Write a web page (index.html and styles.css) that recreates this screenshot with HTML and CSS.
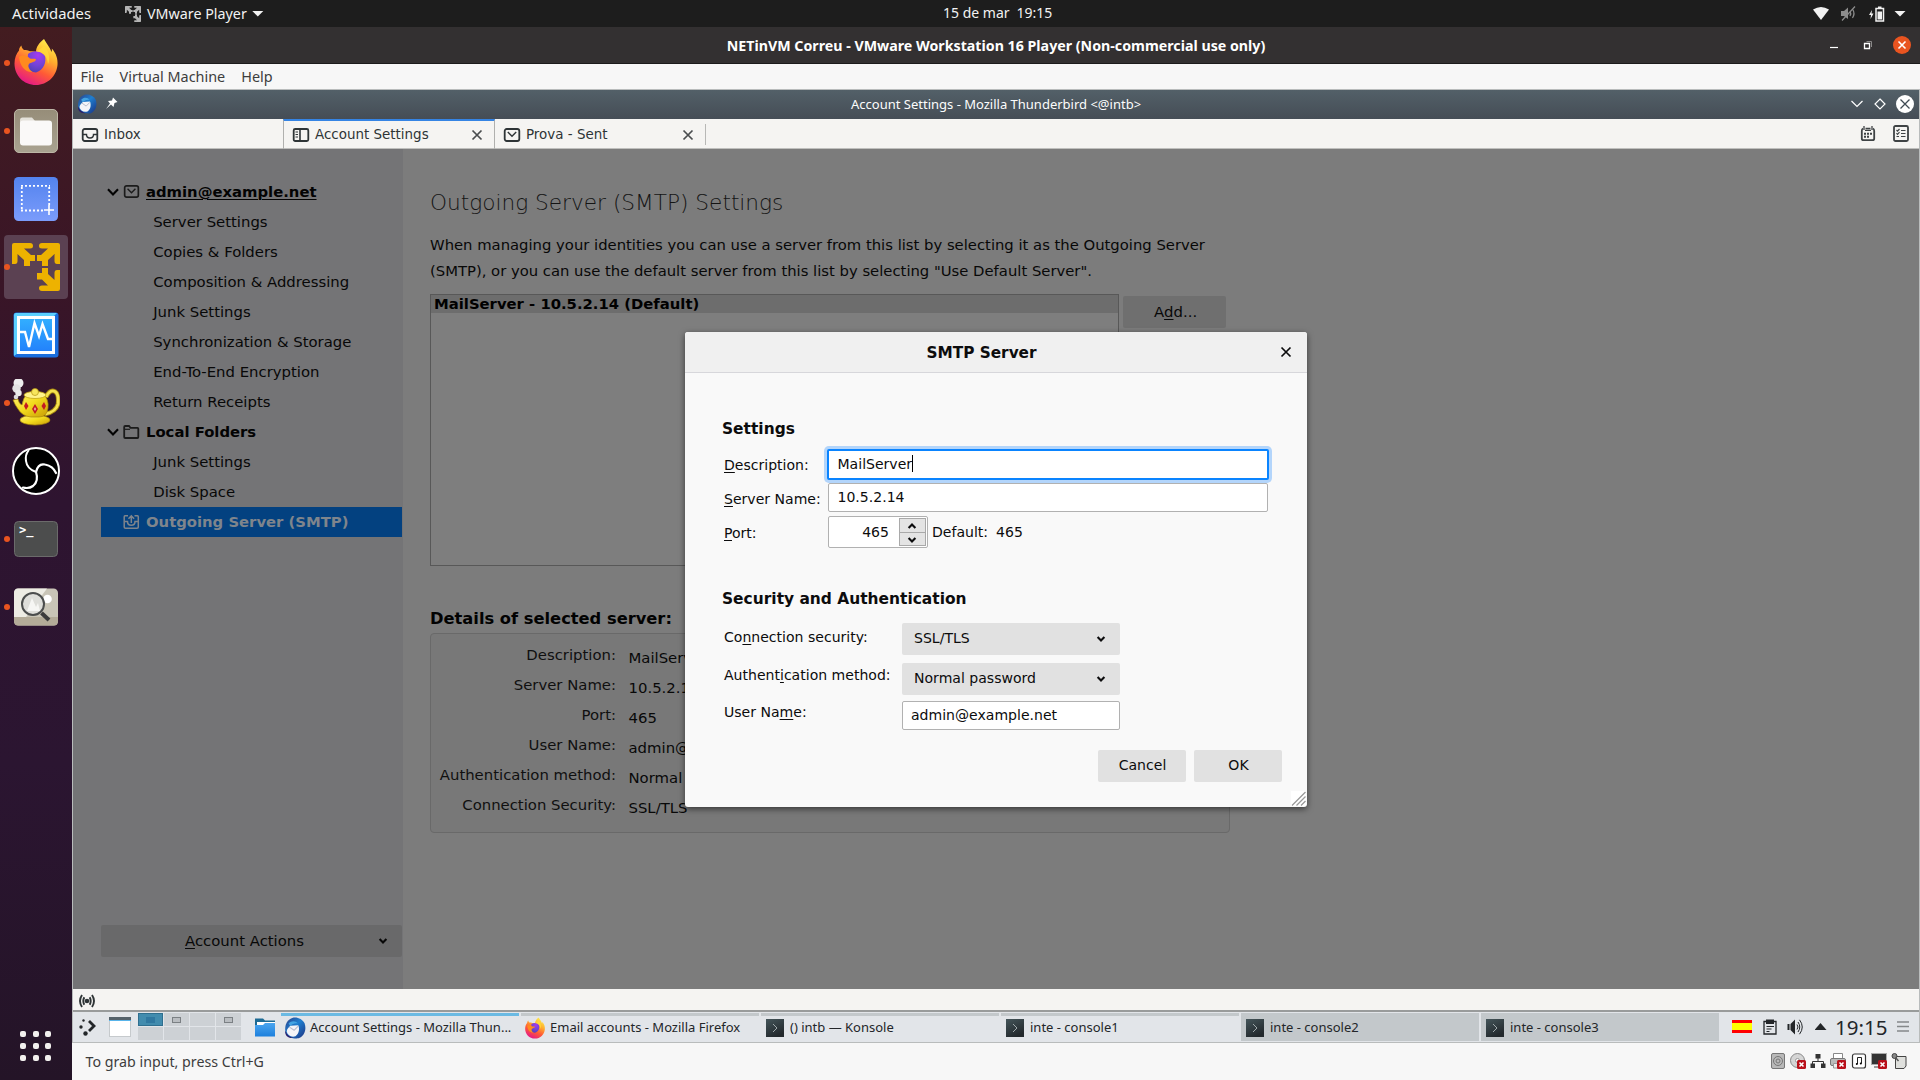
FILE: index.html
```html
<!DOCTYPE html>
<html lang="es">
<head>
<meta charset="utf-8">
<title>NETinVM Correu - VMware Workstation 16 Player</title>
<link rel="stylesheet" href="styles.css">
</head>
<body>
<svg class="defs" width="0" height="0">
  <defs>
    <linearGradient id="fxBody" x1="0.8" y1="0" x2="0.3" y2="1">
      <stop offset="0" stop-color="#fff44f"/><stop offset="0.35" stop-color="#ffb02e"/><stop offset="0.65" stop-color="#ff5a36"/><stop offset="1" stop-color="#e3168b"/>
    </linearGradient>
    <radialGradient id="fxGlobe" cx="0.6" cy="0.2" r="0.9">
      <stop offset="0" stop-color="#a43af0"/><stop offset="0.5" stop-color="#7543d8"/><stop offset="1" stop-color="#4a3fae"/>
    </radialGradient>
    <linearGradient id="fileBg" x1="0" y1="0" x2="0" y2="1"><stop offset="0" stop-color="#968d79"/><stop offset="1" stop-color="#a9a391"/></linearGradient>
    <linearGradient id="shotBg" x1="0" y1="0" x2="0" y2="1"><stop offset="0" stop-color="#5383ee"/><stop offset="1" stop-color="#7b9cfb"/></linearGradient>
    <linearGradient id="vbBg" x1="0" y1="0" x2="0" y2="1"><stop offset="0" stop-color="#33b0ff"/><stop offset="1" stop-color="#2280fb"/></linearGradient>
    <linearGradient id="pot" x1="0" y1="0" x2="1" y2="1"><stop offset="0" stop-color="#fff27a"/><stop offset="0.5" stop-color="#f3dc1e"/><stop offset="1" stop-color="#c79a05"/></linearGradient>
    <linearGradient id="tbBlue" x1="0" y1="0" x2="1" y2="1"><stop offset="0" stop-color="#2b3f86"/><stop offset="0.45" stop-color="#1f7fd0"/><stop offset="1" stop-color="#1b3080"/></linearGradient>
    <linearGradient id="konBg" x1="0" y1="0" x2="0.5" y2="1"><stop offset="0" stop-color="#44555a"/><stop offset="1" stop-color="#23292d"/></linearGradient>
    <linearGradient id="fold" x1="0" y1="0" x2="0" y2="1"><stop offset="0" stop-color="#4aa5ef"/><stop offset="1" stop-color="#1d80dd"/></linearGradient>
    <symbol id="firefox" viewBox="0 0 44 48">
      <path d="M30 1C32 5 36 9 37.500 14C38 12.500 38 11.500 37.800 10.500C42 15 44 21 43.500 27C42.500 38 33.500 47 22 47C9.500 47 0.500 37.500 0.500 25.500C0.500 20 2.500 15.500 5 12.500C5 11 5.500 9 7.500 7.500C7.500 9.500 8.500 10.800 10 12C12 12 14.500 12.300 16 13.200C18.500 13 20.500 13.200 22 14C22 9.500 25 4.500 30 1Z" fill="url(#fxBody)"/>
      <path d="M14 16C19 12 27 12 31 18C32.500 24 30 32 22 34.500C14 34 11 28 13.500 23Z" fill="url(#fxGlobe)"/>
      <path d="M5 19C9 16.500 13 17.500 16 20.500C19 21 22 20 22 21.500C21.500 24 18.500 24 16.500 25C13 26 14 31 18.500 34C11 34.500 6 28 5 19Z" fill="#ff8a1f"/>
      <path d="M22 14C25 13 33 15 34 26C37 20 34 11 30 8Z" fill="#ffd93a" opacity="0.8"/>
    </symbol>
    <symbol id="thunderbird" viewBox="0 0 24 24">
      <path d="M9 1C14 -0.500 20 2 22.500 7C24.500 13 23 20 16 23.300C10 24 3 22 1.500 16C0.500 9 3 3 9 1Z" fill="url(#tbBlue)"/>
      <path d="M3 16C3 13 5 11.500 7 9.500L15.500 9C17 12 17 18 12.500 21C8 22.500 4 20 3 16Z" fill="#f4f4f8"/>
      <path d="M6 11L11 14.500L15.500 10" fill="none" stroke="#b9bccb" stroke-width="1.200"/>
      <path d="M5 7C8 3.500 13 4 15 7C12 6.500 9 7.500 7 10Z" fill="#4bb3ee" opacity="0.8"/>
      <path d="M1.500 15C3 19.500 6 21.500 10 23C4 23.500 0.500 19.500 1.500 15Z" fill="#2a1d6b"/>
    </symbol>
    <symbol id="konsole" viewBox="0 0 18 18">
      <rect width="18" height="18" fill="url(#konBg)"/><path d="M7 5L11 9L7 13" fill="none" stroke="#9fa9ac" stroke-width="1"/>
    </symbol>
    <symbol id="envelope" viewBox="0 0 18 16">
      <rect x="1.700" y="2" width="14.600" height="12" rx="2" fill="none" stroke="currentColor" stroke-width="1.800"/><path d="M4.800 5L9 9.300L13.200 5" fill="none" stroke="currentColor" stroke-width="1.400"/>
    </symbol>
    <symbol id="twisty" viewBox="0 0 12 8"><path d="M1 1.200L6 6.400L11 1.200" fill="none" stroke="currentColor" stroke-width="2.100"/></symbol>
    <symbol id="drop" viewBox="0 0 10 8"><path d="M1.600 2L5 5.400L8.400 2" fill="none" stroke="currentColor" stroke-width="2.100"/></symbol>
    <symbol id="cross" viewBox="0 0 12 12"><path d="M1.500 1.500L10.500 10.500M10.500 1.500L1.500 10.500" fill="none" stroke="currentColor" stroke-width="1.700"/></symbol>
    <symbol id="badge" viewBox="0 0 9 9"><rect width="9" height="9" rx="1.500" fill="#b9101a"/><path d="M2.500 2.500L6.500 6.500M6.500 2.500L2.500 6.500" stroke="#fff" stroke-width="1.600"/></symbol>
    <symbol id="vmware" viewBox="0 0 48 48">
      <path d="M0 2Q0 0 2 0H18Q21 0 21 3Q21 5.500 18 5.500H12L19 12H23V18H18V23H12V17L5.500 11V18Q5.500 21 3 21H0Z"/>
      <path d="M48 2Q48 0 46 0H30Q27 0 27 3Q27 5.500 30 5.500H36L29 12H25V18H30V23H36V17L42.500 11V18Q42.500 21 45 21H48Z"/>
      <path d="M48 46Q48 48 46 48H30Q27 48 27 45Q27 42.500 30 42.500H36L30 36.500H25V30H30V25H36V31L42.500 37V30Q42.500 27 45 27H48Z"/>
    </symbol>
  </defs>
</svg>

<header class="topbar">
  <span class="activities">Actividades</span>
  <span class="appmenu"><svg class="vm-mini" viewBox="0 0 48 48"><use href="#vmware"/></svg><span class="app-name">VMware Player</span><i class="caret"></i></span>
  <span class="clock"><span>15 de mar</span><span>19:15</span></span>
  <span class="indicators">
    <svg width="16" height="13" viewBox="0 0 16 13"><path d="M0 2.500Q8 -2.500 16 2.500L8 13Z" fill="#f2f2f2"/></svg>
    <svg width="16" height="15" viewBox="0 0 16 15"><path d="M0 5H3L7 1.500V13L3 10H0Z" fill="#8c8c8c"/><path d="M9 5Q10.500 7.500 9 10M11.500 3Q14.500 7.500 11.500 12M1 14.500L14 0.500" stroke="#8c8c8c" stroke-width="1.200" fill="none"/></svg>
    <svg width="16" height="16" viewBox="0 0 16 16"><path d="M3 4L0 9H2L1.500 13L4.500 7.500H2.500Z" fill="#f2f2f2"/><path d="M7 2.500H14.500V15H7Z" fill="none" stroke="#f2f2f2" stroke-width="1.500"/><path d="M9 0.500H12.500V2H9ZM8.500 5.500H13V13.500H8.500Z" fill="#f2f2f2"/></svg>
    <i class="caret"></i>
  </span>
</header>

<div class="workspace">
  <nav class="dock">
    <div class="launcher"><i class="dot"></i><svg width="46" height="48" viewBox="0 0 44 48" class="fx"><use href="#firefox"/></svg></div>
    <div class="launcher"><i class="dot"></i><svg width="48" height="48" viewBox="0 0 48 48"><rect x="2.500" y="2.500" width="43" height="43" rx="4.500" fill="url(#fileBg)" stroke="#bdb7a6"/><path d="M8 13Q8 10.500 10.500 10.500H20L23 14V20H8Z" fill="#e4e1da"/><rect x="8" y="13.500" width="32" height="25" rx="3" fill="#faf9f8"/></svg></div>
    <div class="launcher"><svg width="48" height="48" viewBox="0 0 48 48"><rect x="2" y="2" width="44" height="44" rx="4.500" fill="url(#shotBg)"/><path d="M9 10.800H38M9.800 12V36M9 35.500H33M37.200 12V30" stroke="#fff" stroke-width="1.800" stroke-dasharray="2 2" fill="none"/><path d="M37 30V40M32 35H42" stroke="#fff" stroke-width="1.600"/></svg></div>
    <div class="launcher active"><i class="dot"></i><svg width="48" height="48" viewBox="0 0 48 48" fill="#edb200"><use href="#vmware"/></svg></div>
    <div class="launcher"><svg width="48" height="48" viewBox="0 0 48 48"><rect x="1.500" y="1.500" width="45" height="45" rx="3" fill="#1a6ede"/><path d="M2 45V4Q2 2 4 2H45L41 6H6V42Z" fill="#5bd0ff"/><rect x="6.500" y="6.500" width="35" height="35" fill="url(#vbBg)" stroke="#fff" stroke-width="3"/><path d="M8 21H13L17 36L22.500 12L27 25L30.500 13L36 28H41" stroke="#fff" stroke-width="2.400" fill="none"/></svg></div>
    <div class="launcher"><i class="dot"></i><svg width="48" height="48" viewBox="0 0 48 48"><path d="M34 18Q38 10 43 12.500Q47 15 46 25Q44 33 33 35" fill="none" stroke="#a88a10" stroke-width="4.500"/><path d="M34 18Q38 10 43 12.500Q47 15 46 25Q44 33 33 35" fill="none" stroke="#f6e350" stroke-width="2.800"/><ellipse cx="23" cy="41" rx="15" ry="5" fill="url(#pot)" stroke="#a8850a" stroke-width="0.700"/><path d="M1 21L6 20Q7 25 10 26Q11 19 15 15Q23 11 31 15Q37 20 36 29Q35 38 27 38H19Q10 37 6 30Q3 26 1 21Z" fill="url(#pot)" stroke="#a8850a" stroke-width="0.700"/><ellipse cx="23" cy="16" rx="11" ry="3.500" fill="#fff38a" stroke="#c4a515" stroke-width="0.800"/><circle cx="23" cy="13" r="3.500" fill="#f7e65c" stroke="#b59510" stroke-width="0.700"/><path d="M14 23L16.500 27L14 31L12 27ZM23 25L26 30L23 35L20 30ZM32 23L34 27L32 31L29.500 27Z" fill="#c41a22"/><path d="M23 28L24.200 30L23 32L21.800 30Z" fill="#f0a8a0"/><circle cx="6.500" cy="4" r="5" fill="#eee"/><circle cx="4.500" cy="9.500" r="4.200" fill="#e2e2e2"/><circle cx="6.500" cy="14" r="3.200" fill="#eaeaea"/><circle cx="4" cy="18" r="2.300" fill="#ddd"/></svg></div>
    <div class="launcher"><svg width="48" height="48" viewBox="0 0 48 48"><circle cx="24" cy="24" r="23" fill="#000" stroke="#fff" stroke-width="2"/><g fill="none" stroke="#fff" stroke-linecap="round"><path d="M24 25Q15 22 14 14Q13 8 16.500 3.500" stroke-width="2"/><path d="M24 25Q26 16 33 17.500Q41 19 44 26" stroke-width="2.200"/><path d="M24 25Q27 34 21 39Q17 42 11 40.500" stroke-width="2.200"/></g></svg></div>
    <div class="launcher"><i class="dot"></i><svg width="48" height="48" viewBox="0 0 48 48"><rect x="2.500" y="6.500" width="43" height="35" rx="4" fill="#4c4d4d" stroke="#6b6b6b"/><text class="term-prompt" x="7" y="19">&gt;_</text></svg></div>
    <div class="launcher"><i class="dot"></i><svg width="48" height="48" viewBox="0 0 48 48"><rect x="2" y="5.500" width="44" height="37" rx="4.500" fill="#c9c5b7"/><path d="M6 5.500H35L14 34H2V10Q2 5.500 6 5.500Z" fill="#edece4"/><path d="M2 34H46V38Q46 42.500 42 42.500H6Q2 42.500 2 38Z" fill="#b3ab98"/><circle cx="35.500" cy="16" r="4.300" fill="#fff"/><circle cx="21" cy="21" r="11" fill="#dededa" stroke="#4b4d4d" stroke-width="2"/><path d="M15 28L20 15L24 24L26 20L28 28Z" fill="#f6f6f4"/><path d="M29.500 30L37 37" stroke="#3c3c3c" stroke-width="4"/></svg></div>
    <div class="apps-grid"><i></i><i></i><i></i><i></i><i></i><i></i><i></i><i></i><i></i></div>
  </nav>

  <section class="player">
    <div class="player-title">
      <span>NETinVM Correu - VMware Workstation 16 Player (Non-commercial use only)</span>
      <div class="player-controls">
        <svg width="10" height="10" viewBox="0 0 10 10"><path d="M1 7.500H9" stroke="#fff" stroke-width="1.200"/></svg>
        <svg width="10" height="10" viewBox="0 0 10 10"><path d="M1.500 3.500H6.500V8.500H1.500Z" stroke="#fff" stroke-width="1.300" fill="none"/><path d="M3.500 1.500H8.500V7" stroke="#8b8989" stroke-width="1" fill="none"/></svg>
        <svg width="18" height="18" viewBox="0 0 18 18"><circle cx="9" cy="9" r="9" fill="#e95420"/><path d="M5.500 5.500L12.500 12.500M12.500 5.500L5.500 12.500" stroke="#fff" stroke-width="1.600"/></svg>
      </div>
    </div>
    <div class="player-menu"><span>File</span><span>Virtual Machine</span><span>Help</span></div>

    <div class="guest">
      <div class="tb-title">
        <svg class="tb-logo" width="20" height="20"><use href="#thunderbird"/></svg>
        <svg class="pin" width="13" height="13" viewBox="0 0 13 13"><path d="M8 0.500L12.500 5L9.500 6L8.500 10L6 7.500L1 12L5 6.500L3 4L7 3.500Z" fill="#fff"/></svg>
        <span>Account Settings - Mozilla Thunderbird &lt;@intb&gt;</span>
        <div class="tb-controls">
          <svg width="14" height="8" viewBox="0 0 14 8"><path d="M1.500 1L7 6.500L12.500 1" stroke="#fff" stroke-width="1.200" fill="none"/></svg>
          <svg width="12" height="12" viewBox="0 0 12 12"><path d="M6 1L11 6L6 11L1 6Z" stroke="#fff" stroke-width="1.200" fill="none"/></svg>
          <svg width="18" height="18" viewBox="0 0 18 18"><circle cx="9" cy="9" r="9" fill="#fff"/><path d="M4.500 4.500L13.500 13.500M13.500 4.500L4.500 13.500" stroke="#3f4b53" stroke-width="1.300"/></svg>
        </div>
      </div>

      <div class="tabs">
        <div class="tab"><svg width="18" height="16" viewBox="0 0 18 16"><rect x="1.700" y="2" width="14.600" height="12" rx="2" fill="none" stroke="currentColor" stroke-width="1.800"/><path d="M2 7.500H5.500Q5.500 11 9 11Q12.500 11 12.500 7.500H16" fill="none" stroke="currentColor" stroke-width="1.400"/></svg><span>Inbox</span></div>
        <div class="tab selected"><svg width="18" height="16" viewBox="0 0 18 16"><rect x="1.700" y="2" width="14.600" height="12" rx="1.500" fill="none" stroke="currentColor" stroke-width="1.800"/><path d="M8 2V14" stroke="currentColor" stroke-width="1.600"/><path d="M3.500 5H6M3.500 7.500H6M3.500 10H6" stroke="currentColor"/></svg><span>Account Settings</span><svg class="tab-x" width="12" height="12"><use href="#cross"/></svg></div>
        <div class="tab"><svg width="18" height="16"><use href="#envelope"/></svg><span>Prova - Sent</span><svg class="tab-x" width="12" height="12"><use href="#cross"/></svg></div>
        <i class="tab-sep"></i>
        <div class="tab-tools">
          <svg width="16" height="16" viewBox="0 0 16 16"><path d="M3 2.500Q1.800 3 1.800 5V12.500Q1.800 14.200 3.500 14.200H12.500Q14.200 14.200 14.200 12.500V5Q14.200 3 13 2.500" fill="none" stroke="currentColor" stroke-width="1.800"/><path d="M4 0V4M12 0V4M5.500 2.500H10.500M5 4.300H11" stroke="currentColor" stroke-width="1.300"/><path d="M4 7.700H6M7 7.700H9M10 7.700H12M4 10.800H6M7 10.800H9" stroke="currentColor" stroke-width="2"/></svg>
          <svg width="16" height="17" viewBox="0 0 16 17"><rect x="1" y="1" width="14" height="15" rx="1.500" fill="none" stroke="currentColor" stroke-width="1.800"/><path d="M8 5.500H12.500M8 8.500H12.500M8 11.500H12.500M3.500 5L4.500 6.200L6.500 4M3.500 8.200L4.500 9.400L6.500 7.200M3.500 11.500H6" fill="none" stroke="currentColor" stroke-width="1.200"/></svg>
        </div>
      </div>

      <div class="page">
        <aside class="accounts">
          <div class="node account"><svg class="tw" width="12" height="8"><use href="#twisty"/></svg><svg width="17" height="15"><use href="#envelope"/></svg><u>admin@example.net</u></div>
          <div class="node">Server Settings</div>
          <div class="node">Copies &amp; Folders</div>
          <div class="node">Composition &amp; Addressing</div>
          <div class="node">Junk Settings</div>
          <div class="node">Synchronization &amp; Storage</div>
          <div class="node">End-To-End Encryption</div>
          <div class="node">Return Receipts</div>
          <div class="node account"><svg class="tw" width="12" height="8"><use href="#twisty"/></svg><svg width="17" height="16" viewBox="0 0 17 16"><path d="M1.200 13V3Q1.200 2 2.200 2H6L7.500 3.800H14.500Q15.300 3.800 15.300 4.800V13Q15.300 14 14.500 14H2.200Q1.200 14 1.200 13Z" fill="none" stroke="currentColor" stroke-width="1.800"/><path d="M2 5.300H7" stroke="currentColor" stroke-width="1.200"/></svg>Local Folders</div>
          <div class="node">Junk Settings</div>
          <div class="node">Disk Space</div>
          <div class="node account current"><svg width="17" height="16" viewBox="0 0 17 16"><path d="M5 1.800H2Q1.200 1.800 1.200 3V13Q1.200 14.200 2.500 14.200H14Q15.300 14.200 15.300 13V3Q15.300 1.800 14.500 1.800H11.500M2 7.500H4.500Q4.500 11.300 8.300 11.300Q12 11.300 12 7.500H14.500" fill="none" stroke="currentColor" stroke-width="1.500"/><path d="M8.300 9V2M5.500 4.700L8.300 1.900L11.100 4.700" fill="none" stroke="currentColor" stroke-width="1.500"/></svg>Outgoing Server (SMTP)</div>
          <div class="actions"><span><u>A</u>ccount Actions</span><svg width="10" height="8"><use href="#drop"/></svg></div>
        </aside>

        <main class="settings">
          <h1>Outgoing Server (SMTP) Settings</h1>
          <p>When managing your identities you can use a server from this list by selecting it as the Outgoing Server<br>(SMTP), or you can use the default server from this list by selecting "Use Default Server".</p>
          <div class="server-row">
            <div class="server-list"><div class="server-item">MailServer - 10.5.2.14 (Default)</div></div>
            <div class="add">A<u>d</u>d...</div>
          </div>
          <h2>Details of selected server:</h2>
          <dl class="details">
            <dt>Description:</dt><dd>MailServer</dd>
            <dt>Server Name:</dt><dd>10.5.2.14</dd>
            <dt>Port:</dt><dd>465</dd>
            <dt>User Name:</dt><dd>admin@example.net</dd>
            <dt>Authentication method:</dt><dd>Normal password</dd>
            <dt>Connection Security:</dt><dd>SSL/TLS</dd>
          </dl>
        </main>

        <div class="dialog">
          <div class="dialog-head"><span>SMTP Server</span><svg width="12" height="12"><use href="#cross"/></svg></div>
          <div class="dialog-body">
            <h3>Settings</h3>
            <div class="grid server-grid">
              <label><u>D</u>escription:</label><div class="field focus">MailServer<i class="cursor"></i></div>
              <label><u>S</u>erver Name:</label><div class="field">10.5.2.14</div>
              <label class="l-port"><u>P</u>ort:</label>
              <div class="port-row">
                <div class="field port"><span>465</span><div class="spin"><i><svg class="flip" width="10" height="8"><use href="#drop"/></svg></i><i><svg width="10" height="8"><use href="#drop"/></svg></i></div></div>
                <span class="port-label">Default:</span><span class="port-default">465</span>
              </div>
            </div>
            <h3 class="second">Security and Authentication</h3>
            <div class="grid auth-grid">
              <label>Co<u>n</u>nection security:</label><div class="select"><span>SSL/TLS</span><svg width="10" height="8"><use href="#drop"/></svg></div>
              <label>Authent<u>i</u>cation method:</label><div class="select"><span>Normal password</span><svg width="10" height="8"><use href="#drop"/></svg></div>
              <label>User Na<u>m</u>e:</label><div class="field user">admin@example.net</div>
            </div>
            <div class="buttons"><div class="btn">Cancel</div><div class="btn">OK</div></div>
          </div>
          <svg class="grip" width="15" height="15" viewBox="0 0 15 15"><rect width="15" height="15" fill="#fff"/><path d="M1 14.500L14.500 1M5.500 14.500L14.500 5.500M10 14.500L14.500 10" stroke="#9a9a9a" stroke-width="1.300"/></svg>
        </div>
      </div>

      <div class="tb-status"><svg width="16" height="14" viewBox="0 0 16 14"><circle cx="8" cy="7" r="2.300" fill="currentColor"/><path d="M5.300 3.200Q3.300 7 5.300 10.800M10.700 3.200Q12.700 7 10.700 10.800M3 1Q-1 7 3 13M13 1Q17 7 13 13" fill="none" stroke="currentColor" stroke-width="1.900"/></svg></div>

      <div class="panel">
        <svg class="kickoff" width="18" height="18" viewBox="0 0 18 18"><circle cx="4.500" cy="2.500" r="1.200"/><circle cx="2" cy="9" r="1.700"/><circle cx="6.500" cy="15.500" r="2.200"/><path d="M10 3L15 8L10 13" fill="none" stroke="#232629" stroke-width="2.800"/></svg>
        <svg class="desk" width="22" height="20" viewBox="0 0 22 20"><rect y="0" width="22" height="20" fill="#c6cacd"/><rect width="22" height="3" fill="#54616a"/><rect y="3" width="22" height="1" fill="#58b4ea"/><rect x="1" y="4" width="20" height="15" fill="#fff"/></svg>
        <div class="pager"><i class="on"><b></b></i><i><b></b></i><i></i><i><b></b></i><i></i><i></i><i></i><i></i></div>
        <svg class="dolphin" width="20" height="19" viewBox="0 0 20 19"><path d="M0 0.500H8L10 2.500H20V8H0Z" fill="#1c6a94"/><path d="M2 4H20V7H2Z" fill="#fff"/><path d="M0 7H8L10 5H20V18.500H0Z" fill="url(#fold)"/></svg>
        <div class="task wide focused"><svg width="22" height="22"><use href="#thunderbird"/></svg><span>Account Settings - Mozilla Thun...</span></div>
        <div class="task wide"><svg width="22" height="22"><use href="#firefox"/></svg><span>Email accounts - Mozilla Firefox</span></div>
        <div class="task"><svg width="18" height="18"><use href="#konsole"/></svg><span>() intb — Konsole</span></div>
        <div class="task"><svg width="18" height="18"><use href="#konsole"/></svg><span>inte - console1</span></div>
        <div class="task minimized"><svg width="18" height="18"><use href="#konsole"/></svg><span>inte - console2</span></div>
        <div class="task minimized"><svg width="18" height="18"><use href="#konsole"/></svg><span>inte - console3</span></div>
        <div class="tray">
          <i class="flag"></i>
          <svg width="14" height="16" viewBox="0 0 14 16"><path d="M1 2.500H13V15H1Z" fill="none" stroke="#232629" stroke-width="1.300"/><path d="M3 0.500H11V5H3Z" fill="#232629"/><path d="M3.500 7.500H11M3.500 10H8.500M3.500 12.500H6.500" stroke="#232629"/></svg>
          <svg width="17" height="16" viewBox="0 0 17 16"><path d="M0.500 5V11H2.500V5ZM3.500 5L8 0.500V15.500L3.500 11Z" fill="#232629"/><path d="M10 5.500Q12 8 10 10.500M11 3Q14.500 8 11 13M12.500 0.800Q18 8 12.500 15.200" fill="none" stroke="#232629"/></svg>
          <i class="up"></i>
          <span class="kclock">19:15</span>
          <svg class="tray-menu" width="12" height="11" viewBox="0 0 12 11"><path d="M0 1H12M0 5.500H12M0 10H12" stroke="#85888a" stroke-width="1.600"/></svg>
        </div>
      </div>
    </div>

    <footer class="hint">
      <span>To grab input, press Ctrl+G</span>
      <div class="devices">
        <svg width="16" height="16" viewBox="0 0 16 16"><rect x="1.500" y="0.500" width="13" height="15" rx="1.500" fill="#b9b9b9" stroke="#777"/><circle cx="8" cy="8" r="4.500" fill="none" stroke="#777"/><circle cx="8" cy="8" r="2" fill="none" stroke="#777"/></svg>
        <svg width="16" height="16" viewBox="0 0 16 16"><circle cx="7.500" cy="7.500" r="7" fill="#d5d5d5" stroke="#888"/><circle cx="7.500" cy="7.500" r="2" fill="#fff" stroke="#999"/><use href="#badge" x="7" y="7" width="9" height="9"/></svg>
        <svg width="16" height="16" viewBox="0 0 16 16"><path d="M5.500 1H10.500V5.500H5.500ZM0.500 10.500H5V15H0.500ZM11 10.500H15.500V15H11Z" fill="#333"/><path d="M8 5V8.500M2.500 11V8.500H13.500V11" stroke="#333" fill="none"/></svg>
        <svg width="16" height="16" viewBox="0 0 16 16"><path d="M3.500 0.500H12.500V6H3.500Z" fill="#fff" stroke="#888"/><rect x="0.500" y="5.500" width="15" height="7" rx="1.500" fill="#bbb" stroke="#777"/><path d="M3.500 10.500H12.500V15H3.500Z" fill="#eee" stroke="#999"/><use href="#badge" x="7" y="7" width="9" height="9"/></svg>
        <svg width="16" height="16" viewBox="0 0 16 16"><rect x="1.500" y="1" width="13" height="14" rx="2" fill="#fff" stroke="#333" stroke-width="1.200"/><path d="M6.500 11V4.500H10.500V10.500" stroke="#222" fill="none"/><circle cx="5.800" cy="11" r="1"/><circle cx="9.800" cy="10.500" r="1"/></svg>
        <svg width="16" height="16" viewBox="0 0 16 16"><rect x="0.500" y="0.500" width="15" height="11" fill="#333" stroke="#aaa"/><path d="M3 14H12" stroke="#999" stroke-width="2"/><use href="#badge" x="7" y="7" width="9" height="9"/></svg>
        <svg width="16" height="16" viewBox="0 0 16 16"><path d="M4.500 3.500H15V13L13 15.500H4.500Z" fill="#dfe0dd" stroke="#444"/><circle cx="3.500" cy="3" r="2.500" fill="#888" stroke="#444"/><path d="M4.500 4.500L7.500 8" stroke="#555" stroke-width="1.500"/></svg>
      </div>
    </footer>
  </section>
</div>
</body>
</html>
```
FILE: styles.css
```css
* { box-sizing: border-box; }

body {
  margin: 0;
  width: 1920px;
  height: 1080px;
  overflow: hidden;
  display: flex;
  flex-direction: column;
  font-family: "Noto Sans", sans-serif;
}

svg { display: block; flex: none; }
.defs { position: absolute; }
span, label, dt, dd, h1, h2, h3 { white-space: nowrap; }
u { text-decoration: underline; text-underline-offset: 2px; text-decoration-thickness: 1px; }

/* GNOME top bar */
.topbar {
  height: 27px;
  flex: none;
  display: grid;
  grid-template-columns: 113px 818px 1fr auto;
  align-items: center;
  padding-left: 12px;
  background: #1d1d1d;
  color: #f2f2f2;
  font-size: 14.3px;
}
.activities { font-size: 14.8px; padding-bottom: 1px; }
.appmenu { display: flex; align-items: center; }
.vm-mini { width: 16px; height: 16px; fill: #b5b5b5; margin-right: 6px; }
.caret { width: 12px; height: 6px; margin-left: 5px; background: #f2f2f2; clip-path: polygon(0 0, 100% 0, 50% 100%); }
.clock { display: flex; gap: 7px; font-size: 14px; padding-bottom: 2px; }
.indicators { display: flex; align-items: center; padding-right: 14px; gap: 12px; }
.indicators .caret { margin-left: -3px; }

.workspace { flex: 1; display: flex; min-height: 0; }

/* Dock */
.dock {
  width: 72px;
  flex: none;
  display: flex;
  flex-direction: column;
  padding-top: 2px;
  background: linear-gradient(#431c20, #391527 25%, #2e1430 45%, #2b1531 70%, #241427);
}
.launcher { position: relative; height: 68px; display: flex; align-items: center; justify-content: center; }
.fx { margin-bottom: 2px; }
.active { height: 64px; margin: 2px 4px; border-radius: 4px; background: #5b4152; }
.dot { position: absolute; left: 4px; top: 31px; width: 6px; height: 6px; border-radius: 50%; background: #e95420; }
.active .dot { left: 0; top: 29px; }
.term-prompt { font: bold 12px "DejaVu Sans Mono", monospace; fill: #fff; }
.apps-grid { margin: auto 21px 19px 20px; display: grid; grid-template-columns: repeat(3, 6px); gap: 6px; justify-content: space-between; }
.apps-grid i { height: 6px; border-radius: 2px; background: #f2f0ee; }

/* VMware Player window */
.player { flex: 1; display: flex; flex-direction: column; min-width: 0; background: #f7f7f7; }
.player-title {
  height: 37px;
  flex: none;
  display: grid;
  grid-template-columns: 1fr auto 1fr;
  align-items: center;
  background: #333031;
  border-bottom: 1px solid #1c1b1b;
  color: #fff;
  font-size: 14.22px;
  font-weight: bold;
}
.player-title span { grid-column: 2; }
.player-controls { display: flex; justify-content: flex-end; align-items: center; gap: 24px; padding-right: 9px; }
.player-controls svg:last-child { margin-left: -4px; }
.player-menu { height: 25px; flex: none; display: flex; align-items: center; gap: 16px; padding-left: 8.500px; color: #3d3d3d; font-size: 14.42px; }

.guest {
  height: 954px;
  flex: none;
  display: flex;
  flex-direction: column;
  border: 1px solid #b9bcbc;
  font-family: "DejaVu Sans", sans-serif;
  background: #7c7c7c;
}

/* Thunderbird title bar */
.tb-title {
  height: 29px;
  flex: none;
  display: grid;
  grid-template-columns: 31px 743px auto 1fr;
  align-items: center;
  padding: 0 5px 2px 4px;
  background: linear-gradient(#536068, #454d56);
  color: #fcfcfc;
  font: 13px "Noto Sans", sans-serif;
}
.pin { margin-left: -3px; }
.tb-controls { display: flex; align-items: center; justify-content: flex-end; gap: 10px; }

/* Tabs */
.tabs { height: 30px; flex: none; display: flex; background: #f5f4f2; border-bottom: 1px solid #bfbfbd; color: #2e3436; font-size: 13.45px; }
.tab { width: 211px; display: flex; align-items: center; gap: 5px; padding-left: 8px; }
.tab:first-child { width: 210px; }
.tab svg { margin-top: 2px; }
.tab span { flex: 1; padding-top: 1px; }
.tab.selected { height: 30px; border-top: 2px solid #3584e4; border-right: 1px solid #b0b0ae; border-left: 1px solid #b0b0ae; padding-bottom: 3px; width: 212px; }
.tab .tab-x { margin-right: 11px; color: #4a4d4f; }
.tab:not(.selected) .tab-x { margin-right: 12px; }
.tab-sep { width: 1px; margin: 5px 0 3px -1px; background: #b8b8b6; }
.tab-tools { margin-left: auto; display: flex; align-items: center; gap: 17px; padding-right: 10px; color: #3f4345; }

/* Dimmed settings page */
.page { position: relative; height: 840px; flex: none; display: flex; color: #080808; font-size: 14.87px; }
.accounts { width: 330px; display: flex; flex-direction: column; padding: 28px 1px 32px 28px; background: #747476; }
.node { height: 30px; display: flex; align-items: center; padding-left: 52.200px; white-space: nowrap; }
.account { padding: 0 0 1px 6px; font-weight: bold; font-size: 14.82px; color: #030303; }
.account svg { margin-right: 6px; }
.account .tw { margin-right: 4px; }
.account svg:not(.tw) { color: #1b1b1b; }
.node.current { padding-left: 22px; background: #034180; color: #7f858c; }
.node.current svg { color: #7f858c; }
.actions { margin-top: auto; height: 32px; display: flex; align-items: center; padding: 0 14px 0 84px; background: #69696a; border-radius: 2px; justify-content: space-between; }

.settings { width: 830px; padding-left: 27px; }
h1, h2, h3, p, dl, dd { margin: 0; }
h1 { padding-top: 40px; font: 21.65px/28px "DejaVu Sans Light", "DejaVu Sans", sans-serif; color: #141414; }
p { padding-top: 15px; line-height: 26px; font-size: 14.8px; white-space: nowrap; }
.server-row { display: flex; margin-top: 10px; }
.server-list { width: 689px; height: 272px; border: 1px solid #585858; background: #7e7e7e; }
.server-item { height: 18px; line-height: 18px; padding-left: 3px; font-weight: bold; font-size: 14.82px; background: #6d6d6d; color: #000; }
.add { margin: 2px 0 0 4px; width: 103px; height: 32px; padding-left: 2px; border-radius: 2px; display: flex; align-items: center; justify-content: center; background: #6f6f6f; white-space: pre; }
h2 { margin-top: 41px; font-size: 16.3px; line-height: 24px; height: 26px; color: #020202; }
.details { width: 800px; height: 200px; border: 1px solid #696969; border-radius: 4px; background: #787878; display: grid; grid-template-columns: 185px auto; column-gap: 12.500px; grid-auto-rows: 30px; padding-top: 6px; line-height: 30px; }
.details dt { text-align: right; color: #101010; }
.details dd { padding-top: 3px; }

/* SMTP dialog sits over the page */
.dialog { position: absolute; left: 612px; top: 183px; width: 622px; height: 475px; background: #f9f9f9; border-radius: 3px; box-shadow: 0 2px 6px rgba(0,0,0,0.55); color: #0c0c0d; font-size: 14.05px; }
.dialog-head { height: 41px; display: flex; justify-content: space-between; align-items: center; background: #f0f0f0; border-bottom: 1px solid #d7d7db; border-radius: 3px 3px 0 0; font-weight: bold; font-size: 15.3px; padding: 0 15px 0 241.500px; }
.dialog-head span { padding-top: 1px; }
.dialog-body { padding: 44px 39px 0 37px; }
h3 { font-size: 15.45px; line-height: 24px; }
.grid { display: grid; padding-left: 2px; }
.server-grid { grid-template-columns: 104px 440px; grid-template-rows: 34px 32px 34px; margin-top: 8px; }
.server-grid label { line-height: 32px; }
.server-grid .l-port { line-height: 36px; }
.field { height: 29px; border: 1px solid #b1b1b1; border-radius: 2px; background: #fff; display: flex; align-items: center; padding: 0 0 2px 8.500px; }
.field.focus { height: 31px; margin: 0 -1px; border: 2px solid #0a84ff; box-shadow: 0 0 0 3px #b3d5fb; }
.cursor { width: 1px; height: 17px; background: #000; }
.port-row { display: flex; align-items: center; height: 34px; }
.field.port { width: 100px; height: 32px; padding: 0 1px 0 0; margin-right: 4px; }
.field.port span { flex: 1; text-align: right; padding-right: 10px; }
.spin { width: 27px; height: 28px; display: grid; grid-template-rows: 14px 14px; border: 1px solid #a9a9a9; background: #e4e4e4; }
.spin i { display: flex; align-items: center; justify-content: center; padding-right: 2px; }
.spin i:first-child { border-bottom: 1px solid #a9a9a9; }
.flip { transform: scaleY(-1); }
.port-default { margin-left: 8px; }
.second { margin-top: 38px; }
.auth-grid { grid-template-columns: 178px 218px; grid-template-rows: 40px 38px 32px; margin-top: 12px; }
.auth-grid label { line-height: 28px; }
.auth-grid label:nth-of-type(2) { line-height: 24px; }
.auth-grid label:nth-of-type(3) { line-height: 22px; }
.select { height: 32px; background: #e1e1e1; border-radius: 2px; display: flex; align-items: center; justify-content: space-between; padding: 0 14px 0 12px; }
.select span { padding-bottom: 2px; }
.field.user { padding-left: 8px; }
.buttons { display: flex; justify-content: flex-end; gap: 8px; margin: 17px -14px 0 0; }
.btn { width: 88px; height: 32px; padding: 0 0 2px 1px; background: #e1e1e1; border-radius: 2px; display: flex; align-items: center; justify-content: center; }
.grip { position: absolute; right: 1px; bottom: 1px; }

.tb-status { height: 21px; flex: none; display: flex; align-items: center; padding: 3px 0 0 6px; background: #f5f4f2; color: #2e3436; }

/* KDE panel */
.panel { height: 32px; flex: none; display: flex; align-items: stretch; border-top: 2px solid #999b9b; padding: 1px 0; background: #e2e5e9; color: #232629; font: 13px "Noto Sans", sans-serif; }
.kickoff { align-self: center; margin: 0 12px 0 6px; fill: #232629; }
.desk { align-self: center; margin-right: 7px; }
.pager { display: grid; grid-template-columns: repeat(4, 25px); grid-template-rows: 13px 13px; gap: 1px; margin-right: 14px; }
.pager i { display: flex; align-items: center; justify-content: center; background: #cdd1d5; }
.pager .on { background: #428cae; border: 1px solid #2f6f8f; }
.pager b { width: 9px; height: 6px; border: 1px solid #7b8084; background: #b9bdc1; }
.pager .on b { background: #3078a0; border-color: #3078a0; }
.dolphin { align-self: center; margin-right: 6px; }
.task { width: 238px; margin-right: 2px; display: flex; align-items: center; gap: 6px; padding-left: 5px; border-top: 3px solid #c3c8cb; }
.task svg { margin-bottom: 1px; }
.task span { padding-bottom: 3px; }
.wide { padding-left: 3px; gap: 4px; }
.focused { border-color: #6bbae3; }
.minimized { background: #c3c8cb; }
.tray { flex: 1; display: flex; align-items: center; height: 27px; padding-left: 11px; gap: 10.500px; }
.flag { width: 20px; height: 13px; background: linear-gradient(#f00 0 25%, #ff0 25% 75%, #f00 75%); }
.up { width: 12px; height: 7px; background: #232629; clip-path: polygon(50% 0, 100% 100%, 0 100%); }
.kclock { font-size: 20.5px; line-height: 24px; margin-left: -2px; padding-top: 1px; }
.tray-menu { margin-left: -1px; }

/* Host status line */
.hint { flex: 1; display: flex; align-items: center; justify-content: space-between; padding: 0 13px 1px 13.500px; color: #3d3d3d; font-size: 14.22px; }
.devices { display: flex; gap: 4.200px; }
```
